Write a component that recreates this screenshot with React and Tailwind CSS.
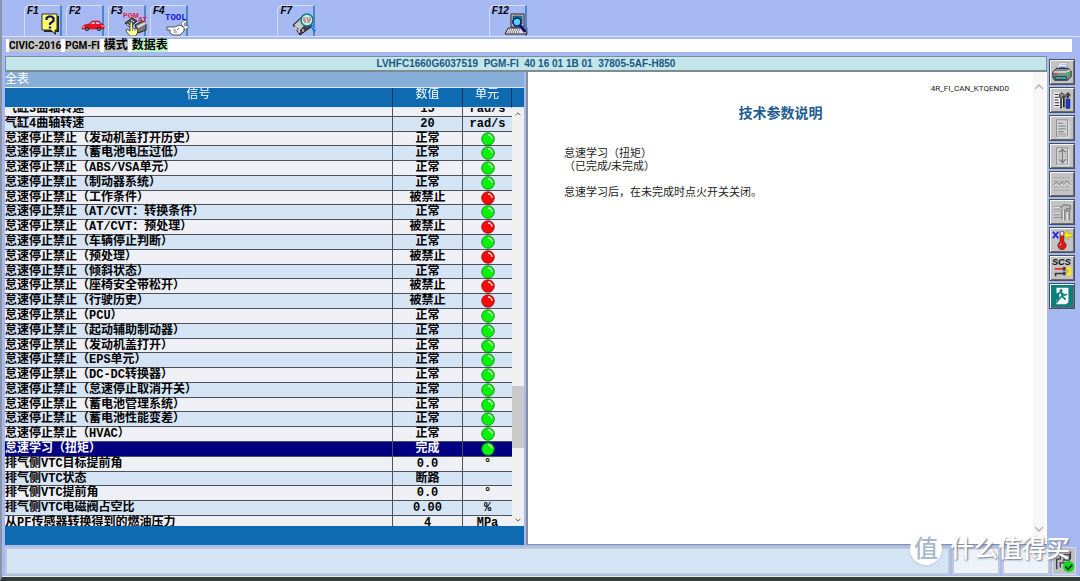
import { useEffect, useRef, useState } from 'react';

const signals = [
  { name: '气缸3曲轴转速', value: '15', unit: 'rad/s' },
  { name: '气缸4曲轴转速', value: '20', unit: 'rad/s' },
  { name: '怠速停止禁止（发动机盖打开历史）', value: '正常', lamp: 'green' },
  { name: '怠速停止禁止（蓄电池电压过低）', value: '正常', lamp: 'green' },
  { name: '怠速停止禁止（ABS/VSA单元）', value: '正常', lamp: 'green' },
  { name: '怠速停止禁止（制动器系统）', value: '正常', lamp: 'green' },
  { name: '怠速停止禁止（工作条件）', value: '被禁止', lamp: 'red' },
  { name: '怠速停止禁止（AT/CVT：转换条件）', value: '正常', lamp: 'green' },
  { name: '怠速停止禁止（AT/CVT：预处理）', value: '被禁止', lamp: 'red' },
  { name: '怠速停止禁止（车辆停止判断）', value: '正常', lamp: 'green' },
  { name: '怠速停止禁止（预处理）', value: '被禁止', lamp: 'red' },
  { name: '怠速停止禁止（倾斜状态）', value: '正常', lamp: 'green' },
  { name: '怠速停止禁止（座椅安全带松开）', value: '被禁止', lamp: 'red' },
  { name: '怠速停止禁止（行驶历史）', value: '被禁止', lamp: 'red' },
  { name: '怠速停止禁止（PCU）', value: '正常', lamp: 'green' },
  { name: '怠速停止禁止（起动辅助制动器）', value: '正常', lamp: 'green' },
  { name: '怠速停止禁止（发动机盖打开）', value: '正常', lamp: 'green' },
  { name: '怠速停止禁止（EPS单元）', value: '正常', lamp: 'green' },
  { name: '怠速停止禁止（DC-DC转换器）', value: '正常', lamp: 'green' },
  { name: '怠速停止禁止（怠速停止取消开关）', value: '正常', lamp: 'green' },
  { name: '怠速停止禁止（蓄电池管理系统）', value: '正常', lamp: 'green' },
  { name: '怠速停止禁止（蓄电池性能变差）', value: '正常', lamp: 'green' },
  { name: '怠速停止禁止（HVAC）', value: '正常', lamp: 'green' },
  { name: '怠速学习（扭矩）', value: '完成', lamp: 'green' },
  { name: '排气侧VTC目标提前角', value: '0.0', unit: '°' },
  { name: '排气侧VTC状态', value: '断路', unit: '' },
  { name: '排气侧VTC提前角', value: '0.0', unit: '°' },
  { name: '排气侧VTC电磁阀占空比', value: '0.00', unit: '%' },
  { name: '从PF传感器转换得到的燃油压力', value: '4', unit: 'MPa' },
];

const HelpIcon = () => (
  <svg viewBox="0 0 24 24" className="w-6 h-6">
    <path d="M5 4h15v16h-3v3l-4-3H5z" fill="#222" />
    <path d="M3 2h15v16h-2v4l-4-4H3z" fill="#ffff66" stroke="#333" />
    <path d="M7.500 8V6l2-1.500h3L14.500 6v3L11 11.500V13" fill="none" stroke="#10106a" strokeWidth="2.200" />
    <path d="M9.800 14.500h2.400v2H9.800z" fill="#10106a" />
  </svg>
);

const CarIcon = () => (
  <svg viewBox="0 0 24 24" className="w-6 h-6">
    <path d="M1 15l2-2 5-1 3-3h7l3 3 2 1v4H1z" fill="#f01020" stroke="#900" strokeWidth=".5" />
    <path d="M9.500 12l2-2H14v2zM15 12v-2h2.500l2 2z" fill="#a6b9f3" />
    <path d="M1 15h3M20 14h3" stroke="#fbb" />
    <circle cx="6" cy="17" r="2" fill="#222" />
    <circle cx="18" cy="17" r="2" fill="#222" />
    <circle cx="6" cy="17" r=".8" fill="#ccc" />
    <circle cx="18" cy="17" r=".8" fill="#ccc" />
  </svg>
);

const ModuleIcon = () => (
  <svg viewBox="0 0 24 24" className="w-6 h-6">
    <path d="M2 11l7-5 5 3-7 6z" fill="#555" stroke="#222" />
    <path d="M12 13l8-4 3 3v6l-8 3z" fill="#777" stroke="#222" />
    <path d="M14 14l8-4 1 2-8 4z" fill="#ddd" />
    <path d="M4 12l3 2M6 10l3 2M8 8l3 2" stroke="#eee" />
    <text x="0" y="6" fontSize="7" fontWeight="bold" fontFamily="Liberation Sans" fill="#e02040">PGM</text>
    <text x="15" y="10" fontSize="7" fontWeight="bold" fontFamily="Liberation Sans" fill="#e02040">AT</text>
    <path d="M7 10h2.500v6l5 1v4l-2 3H7l-4-5 1-2 3 2z" fill="#ffff9a" stroke="#333" strokeWidth=".8" />
    <path d="M9.500 17v2M12 17v2" stroke="#555" strokeWidth=".7" />
  </svg>
);

const ToolIcon = () => (
  <svg viewBox="0 0 24 24" className="w-6 h-6">
    <text x="0" y="8" fontSize="9" fontWeight="bold" fontFamily="Liberation Mono" fill="#1717e0">TOOL</text>
    <path d="M16 11l4-3 2 2-3 2 1 2 3-1v3l-4 2z" fill="#fff" stroke="#555" strokeWidth=".7" />
    <path d="M2 15h8l4-2 5 2v4l-4 4H8l-3-2v-3H2z" fill="#fff" stroke="#333" strokeWidth=".8" />
    <path d="M8 18h3M9 20h3M14 16l-2 2" stroke="#444" strokeWidth=".7" />
  </svg>
);

const MemoryIcon = () => (
  <svg viewBox="0 0 24 24" className="w-6 h-6">
    <path d="M1 13L12 3l5 3 2 9L8 23z" fill="#444" stroke="#222" />
    <path d="M2 13L12 4l5 4L8 18z" fill="#c5c5cc" />
    <path d="M2 15l6 5M4 14v4M7 17v4M11 17v3" stroke="#eee" />
    <circle cx="15" cy="8" r="6" fill="#bff0ec" stroke="#137b83" strokeWidth="1.500" />
    <path d="M11 6h2m1 0h2m1 0h2M11 8h3m1 0h4M12 10h2m1 0h3" stroke="#d43a3a" strokeWidth="1.200" />
    <path d="M19 13l4 6" stroke="#1b5fd0" strokeWidth="2.500" />
    <path d="M20 14l3 4" stroke="#6cf" />
  </svg>
);

const ComputerIcon = () => (
  <svg viewBox="0 0 24 24" className="w-6 h-6">
    <path d="M7 2h13v13H7z" fill="#c8c8d0" stroke="#222" />
    <path d="M9 4h9v8H9z" fill="#0a8c9a" stroke="#333" strokeWidth=".7" />
    <path d="M4 16h16l3 6H1z" fill="#ddd" stroke="#222" />
    <path d="M5 18h12M4 20h12" stroke="#555" strokeDasharray="1 1" />
    <circle cx="13" cy="10" r="4" fill="#48d8ee" stroke="#11118c" strokeWidth="1.600" />
    <path d="M16 13l5 7" stroke="#11118c" strokeWidth="3" />
    <path d="M21 14l2 2v6h-3" fill="none" stroke="#555" />
  </svg>
);

const PrinterIcon = () => (
  <svg viewBox="0 0 24 24" className="w-full h-full">
    <path d="M6 9l3-7h9l-2 7z" fill="#fff" stroke="#777" strokeWidth=".6" />
    <path d="M9 6h7l-1 3H8z" fill="#6d73ef" />
    <path d="M10 4h7" stroke="#a5a9ff" />
    <path d="M2 12l4-4h13l3 3v6l-4 4H4l-2-3z" fill="#7d8c8c" stroke="#222" />
    <path d="M3 12h14l4-2" fill="none" stroke="#ddd" strokeWidth="1.500" />
    <path d="M4 17h13v3H5z" fill="#3fb0a6" stroke="#123" strokeWidth=".8" />
    <path d="M4 14h3" stroke="#f22" strokeWidth="1.400" />
    <path d="M17 12h3v3h-3z" fill="#2c3" />
  </svg>
);

const ToolsListIcon = () => (
  <svg viewBox="0 0 24 24" className="w-full h-full">
    <path d="M3 4h9v16H3z" fill="#f2f2f2" />
    <path d="M4 6h4M4 9h5M4 12h4M4 15h5M4 18h5" stroke="#333" strokeWidth="1.300" />
    <path d="M9 6l3-2 3 3 4-3 2 3-4 2-4-1-1 3-2-1z" fill="#888" stroke="#222" strokeWidth=".9" />
    <path d="M11 11v10M14 9v11" stroke="#222" strokeWidth="1.800" />
    <path d="M12.500 10v10" stroke="#ddd" />
    <path d="M16.500 11h4v10h-4z" fill="#1b3be0" stroke="#08186c" strokeWidth=".8" />
    <path d="M18.500 5v5" stroke="#222" strokeWidth="1.500" />
  </svg>
);

const PageIcon = () => (
  <svg viewBox="0 0 24 24" className="w-full h-full">
    <path d="M6 3h12v18H6z" fill="#d3d3d3" stroke="#8b8b8b" />
    <path d="M8 7h5M8 10h8M8 13h8M8 16h6M8 18.500h8" stroke="#8b8b8b" strokeWidth="1.200" />
    <path d="M19.500 4v18H7" fill="none" stroke="#f3f3f3" />
  </svg>
);

const ScrollPageIcon = () => (
  <svg viewBox="0 0 24 24" className="w-full h-full">
    <path d="M6 3h12v18H6z" fill="#d3d3d3" stroke="#8b8b8b" />
    <path d="M8 7h2M8 10h2M8 13h2M8 16h2M15 7h2M15 10h2M15 13h2M15 16h2" stroke="#8b8b8b" />
    <path d="M12.500 5v14M9.500 8l3-3.500 3 3.500M9.500 16l3 3.500 3-3.500" fill="none" stroke="#777" strokeWidth="1.400" />
    <path d="M19.500 4v18H7" fill="none" stroke="#f3f3f3" />
  </svg>
);

const WaveIcon = () => (
  <svg viewBox="0 0 24 24" className="w-full h-full">
    <path d="M3 5h18M3 9h18M3 15h18M3 19h18" stroke="#999" strokeDasharray="2 1" />
    <path d="M3 13l3-3 3 3 3-3 2 3 3-4 4 4" fill="none" stroke="#8b8b8b" strokeWidth="1.200" />
    <path d="M3 14.500l3-3 3 3 3-3 2 3 3-4 4 4" fill="none" stroke="#f0f0f0" />
  </svg>
);

const GreyToolsIcon = () => (
  <svg viewBox="0 0 24 24" className="w-full h-full">
    <path d="M3 6h8M3 9h7M3 12h8M3 15h7M3 18h8" stroke="#929292" />
    <path d="M10 8l4-4 7 1v4l-4-1v3h3v10M12 9v11M15 9v12" fill="none" stroke="#858585" strokeWidth="1.600" />
    <path d="M4 7h6M4 13h6M13.500 10v11M18 12v9" stroke="#eee" />
  </svg>
);

const TemperatureIcon = () => (
  <svg viewBox="0 0 24 24" className="w-full h-full">
    <path d="M2 3l6 7M8 3l-6 7" stroke="#1b1bea" strokeWidth="1.800" />
    <path d="M10 3h4v11a4.500 4.500 0 1 1-4 0z" fill="#f01010" stroke="#333" strokeWidth=".8" />
    <path d="M10.500 3h3v4h-3z" fill="#eee" />
    <path d="M11 16l-1 2" stroke="#fff" />
    <path d="M14 6.500l4.500-5V5H23v3.500h-4.500v3z" fill="#ffee00" stroke="#8b7d00" strokeWidth=".5" />
  </svg>
);

const ScsIcon = () => (
  <svg viewBox="0 0 24 24" className="w-full h-full">
    <text x="1" y="9" fontSize="10" fontWeight="bold" fontStyle="italic" fontFamily="Liberation Sans" fill="#111">SCS</text>
    <path d="M4 13h12" stroke="#e11" strokeWidth="1.600" />
    <path d="M5 21v-3h11" fill="none" stroke="#333" strokeWidth="1.600" />
    <path d="M13 11h3v4h-3zM13 16h3v4h-3z" fill="#444" />
    <path d="M17 11h5v9h-5z" fill="#ffe600" />
    <path d="M17 14h2v3h-2z" fill="#aaa" />
  </svg>
);

const ExitIcon = () => (
  <svg viewBox="0 0 24 24" className="w-full h-full">
    <path d="M0 0h24v24H0z" fill="#0a7f7d" />
    <path d="M6 3h13v16l-3 2H6v-5h3V9H6z" fill="#fff" />
    <circle cx="11" cy="6" r="1.700" fill="#0a7f7d" />
    <path d="M11 8l2 5 3 3M12 12l-3 3-3 4M6.500 10l4-2 4 3 3-1" fill="none" stroke="#0a7f7d" strokeWidth="1.800" />
  </svg>
);

const Lamp = ({ color }) => (
  <svg
    viewBox="0 0 14 14"
    className="block w-[14px] h-[14px] mx-auto"
    role="img"
    aria-label={color}
  >
    <circle
      cx="7"
      cy="7"
      r="6.300"
      fill={color === 'red' ? '#f80808' : '#06f406'}
      stroke={color === 'red' ? '#8c1010' : '#0b7a1c'}
      strokeWidth=".8"
    />
    <path d="M7 3a4 4 0 0 1 4 4" fill="none" stroke="#e8ffe8" strokeWidth="1.300" />
  </svg>
);

const Chevron = ({ up, className }) => (
  <svg viewBox="0 0 10 6" className={className}>
    <path d={up ? 'M1 5l4-4 4 4' : 'M1 1l4 4 4-4'} fill="none" stroke="currentColor" strokeWidth="1.600" />
  </svg>
);

const functionGroups = [
  [
    { key: 'F1', icon: HelpIcon },
    { key: 'F2', icon: CarIcon },
    { key: 'F3', icon: ModuleIcon },
    { key: 'F4', icon: ToolIcon },
  ],
  [{ key: 'F7', icon: MemoryIcon }],
  [{ key: 'F12', icon: ComputerIcon }],
];

const sideButtons = [
  { label: 'print', icon: PrinterIcon },
  { label: 'tools', icon: ToolsListIcon },
  { label: 'page', icon: PageIcon },
  { label: 'scroll', icon: ScrollPageIcon },
  { label: 'graph', icon: WaveIcon },
  { label: 'setup', icon: GreyToolsIcon },
  { label: 'temperature', icon: TemperatureIcon },
  { label: 'scs', icon: ScsIcon },
  { label: 'exit', icon: ExitIcon },
];

const FunctionKey = ({ label, icon: Icon }) => (
  <button className="flex w-[38px] h-[31px] rounded-tl-md border-t border-l border-[#d3ddfc] border-r-2 border-r-[#4c86c6] pl-[2px] cursor-pointer">
    <span className="w-3 text-left text-[10px] leading-[10px] font-bold italic text-black">{label}</span>
    <span className="mt-[6px] shrink-0">
      <Icon />
    </span>
  </button>
);

const Toolbar = () => (
  <header className="flex items-end h-[37px] pl-[22px] border-b border-[#dbe3fd]">
    {functionGroups.map((group, index) => (
      <div key={index} className={index === 0 ? 'flex gap-1 w-[24%]' : 'flex w-[20%]'}>
        {group.map(({ key, icon }) => (
          <FunctionKey key={key} label={key} icon={icon} />
        ))}
      </div>
    ))}
  </header>
);

const SignalTable = () => {
  const [selected, setSelected] = useState(23);
  const scrollRef = useRef(null);

  useEffect(() => {
    scrollRef.current.scrollTop = 6;
  }, []);

  const rowColor = (index) => {
    if (index === selected) return 'bg-[#000080] text-white';
    return index % 2 ? 'bg-[#d4e4f5]' : 'bg-[#eef0f6]';
  };

  return (
    <section className="flex flex-col flex-1 min-w-0 bg-[#0e6ab1]">
      <h2 className="h-4 bg-[#86aed9] text-white text-[12px] leading-[14px] border-b border-[#dfe8f4]">
        全表
      </h2>
      <div className="flex h-[438px]">
        <div ref={scrollRef} className="flex-1 min-w-0 overflow-hidden">
          <table className="w-full h-[449px] table-fixed border-separate border-spacing-0 text-[12px] leading-[11px] font-bold font-['Liberation_Mono','Noto_Sans_CJK_SC',monospace]">
            <colgroup>
              <col />
              <col className="w-[70px]" />
              <col className="w-[49px]" />
            </colgroup>
            <thead className="sticky top-0 z-10 bg-[#0e6ab1] text-white">
              <tr className="h-5">
                {['信号', '数值', '单元'].map((title) => (
                  <th
                    key={title}
                    className="h-5 p-0 pt-[2px] align-top font-normal border-r border-b border-r-[#0a3560] border-b-[#dfe8f4]"
                  >
                    {title}
                  </th>
                ))}
              </tr>
            </thead>
            <tbody>
              {signals.map((row, index) => (
                <tr key={row.name} className={rowColor(index)} onClick={() => setSelected(index)}>
                  <td className="p-0 pt-[2px] align-top whitespace-nowrap border-r border-b border-[#4d5158]">
                    {row.name}
                  </td>
                  <td className="p-0 pt-[2px] align-top text-center border-r border-b border-[#4d5158]">
                    {row.value}
                  </td>
                  <td className="p-0 align-top text-center border-b border-[#4d5158]">
                    {row.lamp ? (
                      <div className="h-[13px]">
                        <Lamp color={row.lamp} />
                      </div>
                    ) : (
                      <div className="pt-[2px]">{row.unit}</div>
                    )}
                  </td>
                </tr>
              ))}
            </tbody>
          </table>
        </div>
        <div className="flex flex-col items-center w-3 bg-[#f0f0f0]">
          <div className="w-full h-5 bg-[#0e6ab1] border-b border-[#dfe8f4]" />
          <Chevron up className="w-[6px] h-1 my-1 text-[#555]" />
          <div className="w-full flex-1" />
          <div className="w-full h-[62px] bg-[#c9c9c9]" />
          <div className="w-full h-[66px]" />
          <Chevron className="w-[6px] h-1 my-1 text-[#555]" />
        </div>
      </div>
    </section>
  );
};

const Description = () => (
  <section className="flex flex-1 min-w-0 bg-white border-l-2 border-b border-[#8b8f98]">
    <div className="flex-1 min-w-0 pt-[11px] pl-9 pr-6 text-[#222]">
      <p className="text-right text-[8px] leading-3 font-['Roboto',sans-serif]">4R_FI_CAN_KTQEND0</p>
      <h1 className="mt-2 mr-[-24px] pr-9 text-center text-[14px] leading-5 font-bold text-[#215c93]">
        技术参数说明
      </h1>
      <p className="mt-6 text-[11px] leading-[13px]">
        怠速学习（扭矩）
        <br />
        （已完成/未完成）
      </p>
      <p className="mt-[13px] text-[11px] leading-[13px]">怠速学习后，在未完成时点火开关关闭。</p>
    </div>
    <div className="flex flex-col justify-between items-center w-3 py-3 mr-[2px] bg-[#f7f7f7] text-[#b8b8b8]">
      <Chevron up className="w-[10px] h-[6px]" />
      <Chevron className="w-[10px] h-[6px]" />
    </div>
  </section>
);

const StatusBar = () => (
  <footer className="flex gap-[2px] h-7 mt-[2px] ml-[3px] mr-1">
    <div className="flex-1 bg-[#d5e4f5] border-2 border-[#c0c8d4]" />
    <div className="w-12 bg-[#edf1f8] border-2 border-[#c0c8d4]" />
    <div className="w-12 bg-[#edf1f8] border-2 border-[#c0c8d4]" />
    <div className="w-6 bg-[#bfc0c4] border border-[#d8dbe2]">
      <svg viewBox="0 0 24 26" className="w-full h-full">
        <path d="M4 22V11h4V4M19 3v8M7 15h10M8 15v5M12 6h6v6h-6z" fill="none" stroke="#3a3a3a" strokeWidth="1.500" />
        <path d="M11 12v4M15 12l3 4" stroke="#555" />
        <circle cx="17" cy="19" r="6" fill="#10d820" />
        <path d="M13.500 19l3 3 4.500-5" fill="none" stroke="#083008" strokeWidth="1.800" />
      </svg>
    </div>
  </footer>
);

const Watermark = () => (
  <div className="absolute right-[10px] bottom-3 z-20 flex items-center gap-2 pointer-events-none text-white">
    <span className="flex items-center justify-center w-8 h-8 rounded-full bg-white text-[24px] leading-8 font-medium text-[#a9b7c9] shadow">
      值
    </span>
    <span className="text-[24px] leading-7 font-medium [text-shadow:1px_1px_2px_#6b7280]">什么值得买</span>
  </div>
);

const App = () => {
  return (
    <div className="relative flex flex-col min-h-screen bg-[#a6b9f3] border-l-2 border-l-[#8b93a8] border-b-4 border-b-[#353b35] overflow-hidden font-['Liberation_Sans','Noto_Sans_CJK_SC',sans-serif]">
      <Toolbar />

      <nav className="flex items-center gap-1 h-[13px] mt-[2px] ml-1 mr-2 pl-[3px] bg-white text-black text-[12px] leading-[13px]">
        <a href="#civic" className="bg-[#c4c4c4] text-[10px] font-bold font-['Roboto',sans-serif]">CIVIC-2016</a>
        <a href="#pgm-fi" className="bg-[#c4c4c4] text-[10px] font-bold font-['Roboto',sans-serif]">PGM-FI</a>
        <a href="#mode" className="bg-[#c4c4c4] font-bold">模式</a>
        <a href="#data" className="bg-[#c0f7c0] font-bold">数据表</a>
      </nav>

      <main className="flex flex-1 mt-1 ml-[3px] mr-[5px] gap-[2px]">
        <div className="flex flex-col flex-1 min-w-0">
          <div className="h-4 bg-[#c1e5e8] border border-b-2 border-[#7d8b92] text-center text-[10px] leading-[13px] font-bold text-[#1c5585] whitespace-pre">
            {'LVHFC1660G6037519  PGM-FI  40 16 01 1B 01  37805-5AF-H850'}
          </div>
          <div className="flex flex-1 gap-[2px]">
            <SignalTable />
            <Description />
          </div>
        </div>

        <aside className="flex flex-col gap-[2px] pt-[3px]">
          {sideButtons.map(({ label, icon: Icon }) => (
            <button
              key={label}
              aria-label={label}
              className="w-[26px] h-[26px] p-px bg-[#c3c3c3] border border-[#4a4e58] shadow-[inset_1px_1px_0_#f4f4f4,inset_-1px_-1px_0_#6b6b6b] cursor-pointer"
            >
              <Icon />
            </button>
          ))}
        </aside>
      </main>

      <StatusBar />
      <div className="h-px mt-px bg-[#e8ecf8]" />
      <Watermark />
    </div>
  );
};

export default App;
